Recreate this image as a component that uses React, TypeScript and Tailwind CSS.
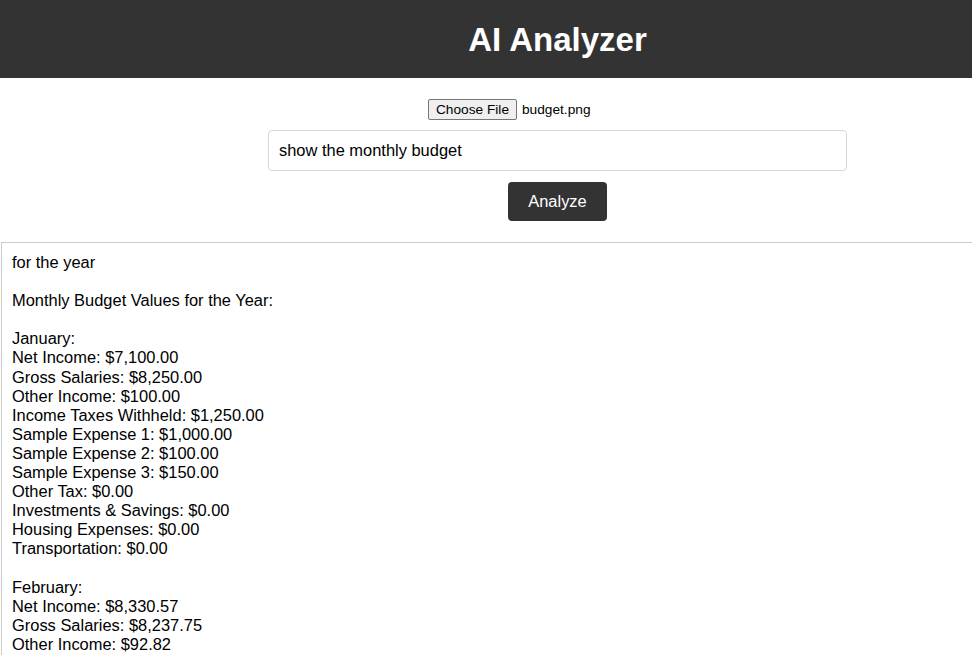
import React from 'react';

const result = `for the year

Monthly Budget Values for the Year:

January:
Net Income: $7,100.00
Gross Salaries: $8,250.00
Other Income: $100.00
Income Taxes Withheld: $1,250.00
Sample Expense 1: $1,000.00
Sample Expense 2: $100.00
Sample Expense 3: $150.00
Other Tax: $0.00
Investments & Savings: $0.00
Housing Expenses: $0.00
Transportation: $0.00

February:
Net Income: $8,330.57
Gross Salaries: $8,237.75
Other Income: $92.82`;

export default function App() {
  return (
    <div className="w-[972px] h-[655px] overflow-hidden bg-white font-['Liberation_Sans',Arial,sans-serif] text-black">
      <div className="w-[1115px]">
        {/* Header */}
        <header className="h-[78px] bg-[#333333] flex items-center justify-center">
          <h1 className="text-[33px] font-bold text-white leading-none">AI Analyzer</h1>
        </header>

        {/* Form */}
        <div className="flex flex-col items-center pt-[21px]">
          <div className="w-[259px] flex items-center h-[21px]">
            <button className="h-[21px] w-[89px] bg-[#efefef] border border-[#767676] rounded-[2px] text-[13.7px] leading-none text-black">
              Choose File
            </button>
            <span className="ml-[5px] text-[13.7px] leading-none">budget.png</span>
          </div>
          <div className="mt-[10px] w-[579px] h-[41px] border border-[#d6d6d6] rounded-[4px] flex items-center px-[10px] text-[16.45px]">
            show the monthly budget
          </div>
          <button className="mt-[11px] w-[99px] h-[39px] bg-[#333333] text-white text-[16.45px] rounded-[4px]">
            Analyze
          </button>
        </div>

        {/* Output */}
        <div className="mt-[21px] ml-px h-[420px] border-l border-t border-[#cccccc] pt-[10px] pl-[10px] whitespace-pre-wrap text-[16.45px] leading-[19.1px]">
          {result}
        </div>
      </div>
    </div>
  );
}
